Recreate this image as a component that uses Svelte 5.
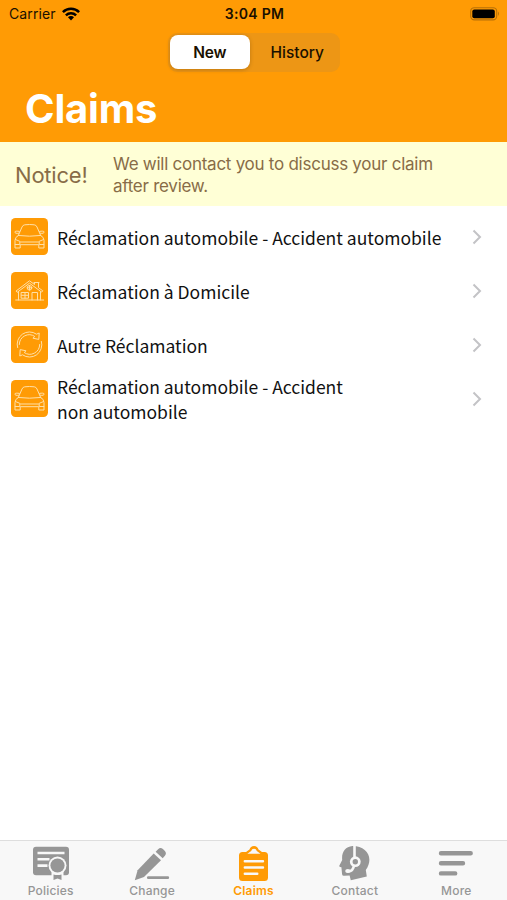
<script lang="ts">
    type Claim = { icon: 'car' | 'house' | 'cycle'; label: string };

    const claims: Claim[] = [
        { icon: 'car', label: 'Réclamation automobile - Accident automobile' },
        { icon: 'house', label: 'Réclamation à Domicile' },
        { icon: 'cycle', label: 'Autre Réclamation' },
        { icon: 'car', label: 'Réclamation automobile - Accident\nnon automobile' }
    ];

    const tabs = ['Policies', 'Change', 'Claims', 'Contact', 'More'];

    let segment = $state('New');
    let activeTab = $state('Claims');
</script>

<div class="screen">
    <header>
        <div class="status">
            <div class="carrier">
                <span>Carrier</span>
                <svg width="18" height="14" viewBox="0 0 18 14">
                    <g fill="none" stroke="#000" stroke-width="2.5">
                        <path d="M0.9 5.2a11.5 11.5 0 0 1 16.2 0" />
                        <path d="M3.9 8.4a7.3 7.3 0 0 1 10.2 0" />
                    </g>
                    <path d="M6 10.3a4.2 4.2 0 0 1 6 0l-3 3.2z" />
                </svg>
            </div>
            <span class="time">3:04 PM</span>
            <div class="battery">
                <svg width="30" height="14" viewBox="0 0 30 14">
                    <rect x="0.7" y="0.7" width="26" height="12.2" rx="3.6" fill="none" stroke="#b87108" stroke-width="1.1" />
                    <rect x="2.3" y="2.4" width="22.5" height="8.8" rx="2" />
                    <path d="M28 4.6q1.9 2.2 0 4.4z" fill="#b87108" />
                </svg>
            </div>
        </div>
        <div class="segments">
            {#each ['New', 'History'] as name}
                <button type="button" class:selected={segment === name} onclick={() => (segment = name)}>{name}</button>
            {/each}
        </div>
        <h1>Claims</h1>
    </header>

    <div class="notice">
        <strong>Notice!</strong>
        <p>We will contact you to discuss your claim after review.</p>
    </div>

    <ul>
        {#each claims as claim}
            <li>
                <svg class="tile" width="37" height="37" viewBox="0 0 37 37">
                    <rect width="37" height="37" rx="4.5" fill="#ff9b05" />
                    <g fill="none" stroke="#ffe0a8" stroke-width="1" stroke-linejoin="round" stroke-linecap="round">
                        {#if claim.icon === 'car'}
                            <path d="M7.3 17.5 11 9q.8-2 2.800-2.200 4.700-.6 9.400 0 2 .2 2.800 2.200l3.700 8.500" />
                            <path d="M7.800 15.200c-2.500.6-4-.2-4-1.200s2.400-1 4.600-.6M29.200 15.200c2.500.6 4-.2 4-1.200s-2.400-1-4.600-.6" />
                            <path d="M7.300 17.500q11.200 1.400 22.400 0M7.300 17.500q-3.300 1.500-3.300 5V30h5.200v-3.300h18.600V30H33v-7.500q0-3.500-3.300-5" />
                            <path d="M4.300 21.500l4.500 1.800v3.200H4.200M32.700 21.500l-4.500 1.800v3.200h4.600M9.500 24h18" />
                        {:else if claim.icon === 'house'}
                            <path d="M4.700 28h28M7.500 28v-8.400M29.500 28v-8.400M5.300 18.800 18.500 8.800l5 3.700v-2h4v5.200l4.300 3.100-1.200 1.300-12.100-8.900-12 8.900z" />
                            <circle cx="18.500" cy="15.800" r="2.300" />
                            <path d="M18.500 13.500v4.600M16.200 15.800h4.600M23 10.500h5" />
                            <path d="M10.500 20.500h7v5.700h-7zM14 20.500v5.700M10.500 23.300h7M21 28v-7.500h5.500V28" />
                        {:else}
                            <path d="M6.600 21.600A12.300 12.300 0 0 1 25.500 8.200l2.700-1.200-.4 6.400-5.900-1.200 1.900-1.700A9.900 9.900 0 0 0 8.300 18.500" />
                            <path d="M30.400 15.400A12.300 12.300 0 0 1 11.500 28.800l-2.700 1.200.4-6.400 5.900 1.200-1.900 1.700A9.900 9.900 0 0 0 28.700 18.500" />
                        {/if}
                    </g>
                </svg>
                <span>{claim.label}</span>
                <svg class="chevron" width="10" height="17" viewBox="0 0 10 17">
                    <path d="M1.500 2.500 8 9l-6.500 6.500" fill="none" stroke="#c3c3c6" stroke-width="2" />
                </svg>
            </li>
        {/each}
    </ul>

    <nav>
        {#each tabs as tab}
            <button type="button" class:active={activeTab === tab} onclick={() => (activeTab = tab)}>
                <svg width="38" height="38" viewBox="0 0 38 38" fill="currentColor">
                    {#if tab === 'Policies'}
                        <rect x="1" y="2.700" width="36" height="28.500" rx="3" />
                        <path d="M5.500 9h27M5.500 15.300h12M5.500 21.600h10" stroke="#f8f8f8" stroke-width="2.600" />
                        <path d="M19.500 27h12v9l-6-3-6 3z" fill="#f8f8f8" />
                        <circle cx="25.500" cy="21.500" r="9" fill="#f8f8f8" />
                        <circle cx="25.500" cy="21.500" r="7.100" />
                        <path d="M21.500 30.500q4 1.200 8 0v5.500l-4-1.500-4 1.500z" />
                    {:else if tab === 'Change'}
                        <path d="m20.700 9.500 7.300 6.800L11 33 1.800 36.300 4.600 26.200z" />
                        <path d="m22.600 7.700 2.500-2.500q2.400-2.200 4.800-.1l2 2q2 2.300 0 4.600l-2.200 2.600z" />
                        <path d="M15.300 33.700h19.500" stroke="currentColor" stroke-width="2.700" stroke-linecap="round" />
                    {:else if tab === 'Claims'}
                        <path d="M7.500 8H11l3.500-2.500q1-3.500 4.500-3.500t4.500 3.500L27 8h2.500q3.500 0 3.500 3.500v22q0 3.500-3.500 3.500h-22Q4 37 4 33.500v-22Q4 8 7.500 8z" />
                        <path d="M12.300 9.800h13.200L21.800 7Q21.300 4.700 19 4.700T16.200 7z" fill="#f8f8f8" />
                        <path d="M9.800 17.200h18.200M9.800 23.500h18.200M9.800 29.800h12.500" stroke="#f8f8f8" stroke-width="2.400" stroke-linecap="round" />
                    {:else if tab === 'Contact'}
                        <g transform="translate(-1 -.3)">
                            <path d="M17.500 2.400C10 3 6.400 9 7.200 16.200L4.300 22q-.3 1 .8 1.200l1.300.4.700 7q.3 1.900 2.200 1.500l5.300-.4 1.200 4.900 16-3.900-1-6.300c8.500-12.500 1-24-13.300-24z" />
                            <path d="M19.500 1v12M12.200 27.500c4.200.8 6.500-2 6.800-6" fill="none" stroke="#f8f8f8" stroke-width="2.600" stroke-linecap="round" />
                            <ellipse cx="12.800" cy="27.300" rx="2.600" ry="1.900" fill="#f8f8f8" />
                            <circle cx="20.300" cy="18" r="5.400" fill="#f8f8f8" />
                            <circle cx="20.300" cy="18" r="2.700" />
                        </g>
                    {:else}
                        <path d="M4 9.200h29.700M4 19.300h22M4 29.400h14.200" stroke="currentColor" stroke-width="4.400" stroke-linecap="round" />
                    {/if}
                </svg>
                <span>{tab}</span>
            </button>
        {/each}
    </nav>
</div>

<style>
    :global(body) {
        margin: 0;
    }

    .screen {
        width: 507px;
        height: 900px;
        display: flex;
        flex-direction: column;
        background: #fff;
        font-family: Inter, "Liberation Sans", sans-serif;
        color: #000;
    }

    header {
        height: 142px;
        box-sizing: border-box;
        background: #ff9b05;
    }

    .status {
        display: grid;
        grid-template-columns: 1fr auto 1fr;
        align-items: center;
        height: 27px;
        padding: 0 7px 0 9px;
        font-size: 14px;
        color: #1a1000;
    }

    .carrier {
        display: flex;
        align-items: center;
        gap: 6px;
        letter-spacing: 0.1px;
    }

    .time {
        font-weight: 600;
        letter-spacing: 0.3px;
    }

    .battery {
        display: flex;
        justify-content: flex-end;
    }

    .segments {
        display: flex;
        width: 172px;
        height: 39px;
        box-sizing: border-box;
        margin: 6px auto 0;
        padding: 2px;
        background: #ed9615;
        border-radius: 9px;
    }

    .segments button {
        flex: 1;
        padding: 0;
        border: none;
        border-radius: 8px;
        background: none;
        font: 500 15.5px Inter, sans-serif;
        color: #1a1000;
    }

    .segments button:last-child {
        padding-left: 7px;
    }

    .segments button.selected {
        height: 34px;
        background: #fff;
        font-weight: 600;
        letter-spacing: -0.3px;
        box-shadow: 0 1px 4px rgba(0, 0, 0, 0.2);
    }

    h1 {
        margin: 12px 0 0 25px;
        font-size: 40px;
        line-height: 50px;
        font-weight: 700;
        letter-spacing: -0.2px;
        color: #fff;
    }

    .notice {
        display: flex;
        align-items: center;
        height: 64px;
        padding-left: 15px;
        background: #ffffd6;
        color: #886c47;
    }

    .notice strong {
        width: 98px;
        padding-top: 1px;
        font-size: 22px;
        font-weight: 400;
        letter-spacing: -0.2px;
    }

    .notice p {
        width: 350px;
        margin: 2px 0 0;
        font-size: 17px;
        line-height: 22px;
        letter-spacing: -0.26px;
    }

    ul {
        flex: 1;
        margin: 0;
        padding: 4px 0 0;
        list-style: none;
    }

    li {
        display: flex;
        align-items: center;
        height: 53.8px;
        padding: 0 25px 0 11px;
    }

    .tile {
        flex: none;
        margin-right: 9px;
    }

    li span {
        flex: 1;
        padding-top: 3px;
        font-family: "Noto Sans CJK SC", sans-serif;
        font-size: 17.5px;
        line-height: 24.5px;
        white-space: pre-line;
        color: #111;
    }

    .chevron {
        flex: none;
        margin-left: 10px;
    }

    nav {
        display: flex;
        height: 60px;
        box-sizing: border-box;
        border-top: 1px solid #dedede;
        background: #f8f8f8;
    }

    nav button {
        flex: 1;
        display: flex;
        flex-direction: column;
        align-items: center;
        padding: 3px 0 0;
        border: none;
        background: none;
        font: 500 12px/18px Inter, sans-serif;
        letter-spacing: 0.2px;
        color: #969696;
    }

    nav button.active {
        color: #ff9b05;
        font-weight: 600;
    }
</style>
